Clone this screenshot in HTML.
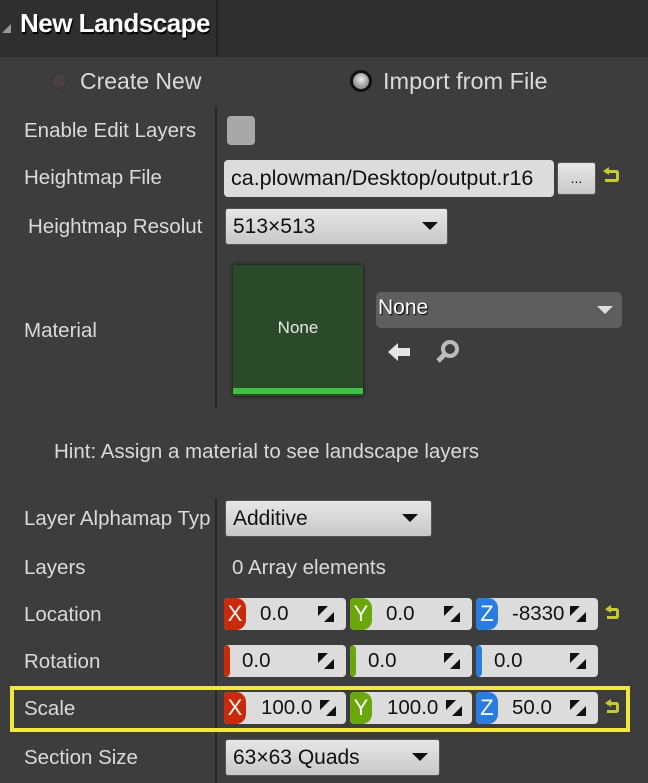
<!DOCTYPE html>
<html><head><style>
*{margin:0;padding:0;box-sizing:border-box}
body{width:648px;height:783px;background:#3d3d3d;font-family:"Liberation Sans",sans-serif;color:#dadada;position:relative;overflow:hidden;font-size:20.5px}
.a{position:absolute}
.hdr{left:0;top:0;width:648px;height:57px;background:#2f2f2f}
.lbl{left:24px;white-space:nowrap}
.vl{background:#262626;width:2px}
.field{background:#dcdcdc;border-radius:4px;color:#111;}
.combo{background:linear-gradient(#e6e6e6,#c8c8c8);border-radius:3px;color:#111;border:1px solid #555}
.tri{width:0;height:0;border-left:8px solid transparent;border-right:8px solid transparent;border-top:8px solid #111}
.vec{height:32px;border-radius:4px;background:#dcdcdc;color:#111;overflow:hidden}
.tag{position:absolute;left:0;top:0;height:32px;color:#fff;font-size:22px;line-height:32px;text-align:center;border-radius:4px 10px 10px 4px}
.num{position:absolute;top:0;line-height:32px;font-size:20.5px}
.sp{position:absolute;top:8px;width:16px;height:16px}
</style></head><body>
<div class="a hdr"></div>
<div class="a vl" style="left:216px;top:0;height:57px;background:#222"></div>
<div class="a" style="left:2px;top:24px;width:0;height:0;border-left:9px solid transparent;border-bottom:9px solid #999"></div>
<div class="a" style="left:20px;top:8px;font-size:26px;font-weight:bold;color:#fff;text-shadow:1px 2px 1px #000;letter-spacing:-0.5px">New Landscape</div>

<div class="a" style="left:51px;top:73px;width:16px;height:16px;border-radius:50%;background:#4a4040;border:1px solid #333"></div>
<div class="a" style="left:80px;top:68px;font-size:23px">Create New</div>
<div class="a" style="left:350px;top:70px;width:22px;height:22px;border-radius:50%;background:radial-gradient(circle at 50% 40%,#eee,#999 60%);border:3px solid #111"></div>
<div class="a" style="left:383px;top:68px;font-size:23.5px">Import from File</div>

<div class="a vl" style="left:215px;top:107px;height:302px"></div>
<div class="a vl" style="left:215px;top:498px;height:285px"></div>

<div class="a lbl" style="top:119px">Enable Edit Layers</div>
<div class="a" style="left:227px;top:116px;width:28px;height:29px;border-radius:4px;background:#a8a8a8"></div>

<div class="a lbl" style="top:166px">Heightmap File</div>
<div class="a field" style="left:224px;top:160px;width:330px;height:37px;font-size:21.5px;line-height:37px;padding-left:7px;white-space:nowrap;overflow:hidden">ca.plowman/Desktop/output.r16</div>
<div class="a combo" style="left:557px;top:162px;width:39px;height:33px;text-align:center;line-height:30px;font-size:14px">...</div>
<div class="a" style="left:605px;top:170px;width:14px;height:12px;border:3px solid #c8c832;border-left:none;border-radius:0 3px 3px 0"></div>
<div class="a" style="left:603px;top:167px;width:0;height:0;border-top:4px solid transparent;border-bottom:4px solid transparent;border-right:6px solid #c8c832"></div>

<div class="a lbl" style="left:28px;top:215px">Heightmap Resolut</div>
<div class="a combo" style="left:225px;top:208px;width:223px;height:37px;line-height:35px;padding-left:7px;font-size:21px">513×513</div>
<div class="a tri" style="left:422px;top:222px"></div>

<div class="a lbl" style="top:319px">Material</div>
<div class="a" style="left:233px;top:265px;width:130px;height:131px;background:#2a4a2a;box-shadow:0 0 4px #111"></div>
<div class="a" style="left:233px;top:388px;width:130px;height:6px;background:#3ec044"></div>
<div class="a" style="left:233px;top:318px;width:130px;text-align:center;font-size:17px;color:#e8e8e8">None</div>
<div class="a" style="left:376px;top:292px;width:246px;height:36px;background:#5e5e5e;border-radius:5px"></div>
<div class="a" style="left:378px;top:296px;font-size:21px;color:#fff;text-shadow:1px 1px 1px #000">None</div>
<div class="a" style="left:597px;top:306px;width:0;height:0;border-left:8px solid transparent;border-right:8px solid transparent;border-top:8px solid #ddd"></div>
<svg class="a" style="left:386px;top:338px" width="28" height="28" viewBox="0 0 28 28"><path d="M2 14 L12 5 V10 H24 V18 H12 V23 Z" fill="#e6e6e6"/></svg>
<svg class="a" style="left:434px;top:338px" width="28" height="28" viewBox="0 0 28 28"><circle cx="16" cy="11" r="7" fill="none" stroke="#bbb" stroke-width="4"/><path d="M11 16 L4 23" stroke="#bbb" stroke-width="5"/></svg>

<div class="a" style="left:54px;top:440px">Hint: Assign a material to see landscape layers</div>

<div class="a lbl" style="top:507px">Layer Alphamap Typ</div>
<div class="a combo" style="left:225px;top:500px;width:207px;height:37px;line-height:35px;padding-left:7px;font-size:21px">Additive</div>
<div class="a tri" style="left:402px;top:514px"></div>

<div class="a lbl" style="top:556px">Layers</div>
<div class="a" style="left:232px;top:556px">0 Array elements</div>

<div class="a lbl" style="top:603px">Location</div>
<div class="a lbl" style="top:650px">Rotation</div>
<div class="a lbl" style="top:697px">Scale</div>
<div class="a lbl" style="top:746px">Section Size</div>

<div class="a" style="left:10px;top:686px;width:620px;height:46px;border:4px solid #f2e640"></div>

<div class="a vec" style="left:224px;top:598px;width:122px"><div class="tag" style="width:22px;background:#c82a0a">X</div><div class="num" style="left:36px">0.0</div><svg class="sp" style="left:94px" viewBox="0 0 16 16"><path d="M0 0H10L0 10Z M16 16H6L16 6Z" fill="#111"/></svg></div>
<div class="a vec" style="left:350px;top:598px;width:122px"><div class="tag" style="width:22px;background:#6aa70a">Y</div><div class="num" style="left:36px">0.0</div><svg class="sp" style="left:94px" viewBox="0 0 16 16"><path d="M0 0H10L0 10Z M16 16H6L16 6Z" fill="#111"/></svg></div>
<div class="a vec" style="left:476px;top:598px;width:122px"><div class="tag" style="width:22px;background:#2a7de0">Z</div><div class="num" style="left:36px">-8330</div><svg class="sp" style="left:94px" viewBox="0 0 16 16"><path d="M0 0H10L0 10Z M16 16H6L16 6Z" fill="#111"/></svg></div>

<div class="a vec" style="left:224px;top:645px;width:122px"><div class="tag" style="width:6px;background:#c82a0a"></div><div class="num" style="left:18px">0.0</div><svg class="sp" style="left:94px" viewBox="0 0 16 16"><path d="M0 0H10L0 10Z M16 16H6L16 6Z" fill="#111"/></svg></div>
<div class="a vec" style="left:350px;top:645px;width:122px"><div class="tag" style="width:6px;background:#6aa70a"></div><div class="num" style="left:18px">0.0</div><svg class="sp" style="left:94px" viewBox="0 0 16 16"><path d="M0 0H10L0 10Z M16 16H6L16 6Z" fill="#111"/></svg></div>
<div class="a vec" style="left:476px;top:645px;width:122px"><div class="tag" style="width:6px;background:#2a7de0"></div><div class="num" style="left:18px">0.0</div><svg class="sp" style="left:94px" viewBox="0 0 16 16"><path d="M0 0H10L0 10Z M16 16H6L16 6Z" fill="#111"/></svg></div>

<div class="a vec" style="left:224px;top:692px;width:122px"><div class="tag" style="width:22px;background:#c82a0a">X</div><div class="num" style="left:37px">100.0</div><svg class="sp" style="left:96px" viewBox="0 0 16 16"><path d="M0 0H10L0 10Z M16 16H6L16 6Z" fill="#111"/></svg></div>
<div class="a vec" style="left:350px;top:692px;width:122px"><div class="tag" style="width:22px;background:#6aa70a">Y</div><div class="num" style="left:37px">100.0</div><svg class="sp" style="left:96px" viewBox="0 0 16 16"><path d="M0 0H10L0 10Z M16 16H6L16 6Z" fill="#111"/></svg></div>
<div class="a vec" style="left:476px;top:692px;width:122px"><div class="tag" style="width:22px;background:#2a7de0">Z</div><div class="num" style="left:36px">50.0</div><svg class="sp" style="left:94px" viewBox="0 0 16 16"><path d="M0 0H10L0 10Z M16 16H6L16 6Z" fill="#111"/></svg></div>

<div class="a" style="left:607px;top:608px;width:12px;height:11px;border:3px solid #c8c832;border-left:none;border-radius:0 3px 3px 0"></div>
<div class="a" style="left:605px;top:605px;width:0;height:0;border-top:4px solid transparent;border-bottom:4px solid transparent;border-right:6px solid #c8c832"></div>
<div class="a" style="left:607px;top:702px;width:12px;height:11px;border:3px solid #c8c832;border-left:none;border-radius:0 3px 3px 0"></div>
<div class="a" style="left:605px;top:699px;width:0;height:0;border-top:4px solid transparent;border-bottom:4px solid transparent;border-right:6px solid #c8c832"></div>

<div class="a combo" style="left:225px;top:739px;width:215px;height:37px;line-height:35px;padding-left:7px;font-size:21px">63×63 Quads</div>
<div class="a tri" style="left:412px;top:753px"></div>
</body></html>
